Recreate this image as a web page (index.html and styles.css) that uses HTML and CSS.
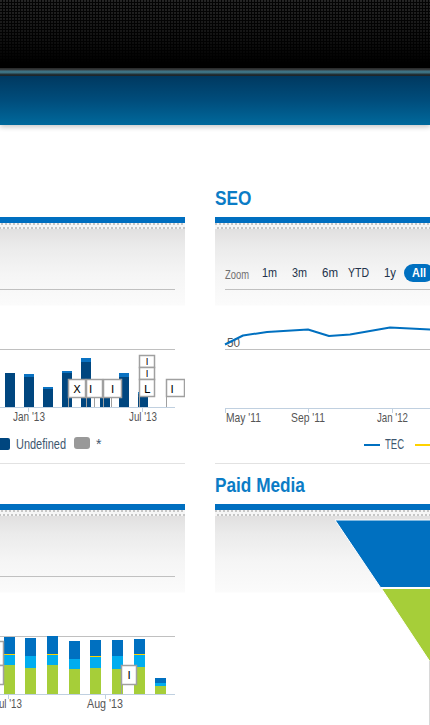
FILE: index.html
```html
<!DOCTYPE html>
<html lang="en">
<head>
<meta charset="utf-8">
<title>Dashboard</title>
<link rel="stylesheet" href="styles.css">
</head>
<body>
<header class="site-header">
  <div class="topbar"></div>
  <div class="stripe"></div>
  <div class="brandbar"></div>
</header>

<main class="dashboard">
  <section class="col">
    <article class="widget">
      <div class="widget-title" aria-hidden="true"></div>
      <div class="panel">
        <div class="panel-body body-tall">
          <svg class="chart" width="400" height="234" viewBox="-215 229 400 234">
            <g class="grid">
              <path d="M-200 289.5H175M-200 349.5H175"/>
            </g>
            <g class="bars-navy">
              <rect x="5" y="373" width="10" height="34"/>
              <rect x="24" y="374" width="10" height="33"/>
              <rect x="43" y="387" width="10" height="20"/>
              <rect x="62" y="371" width="10" height="36"/>
              <rect x="81" y="358" width="10" height="49"/>
              <rect x="100" y="382" width="10" height="25"/>
              <rect x="119" y="373" width="10" height="34"/>
              <rect x="138" y="392" width="10" height="15"/>
            </g>
            <g class="bars-cap">
              <rect x="24" y="374" width="10" height="3"/>
              <rect x="43" y="387" width="10" height="2"/>
              <rect x="62" y="371" width="10" height="2"/>
              <rect x="81" y="358" width="10" height="4"/>
              <rect x="119" y="373" width="10" height="4"/>
              <rect x="138" y="392" width="10" height="2"/>
            </g>
            <path class="axis" d="M-200 407.5H175M28.5 407V412M142.5 407V412"/>
            <g class="flags">
              <path class="stem" d="M68.5 398V407M86.5 398V407M94.5 398V407M103.5 398V407M111.5 398V407M139.5 397V407M166.5 397V407"/>
              <rect x="68.5" y="379.5" width="17" height="18"/>
              <rect x="86.5" y="379.5" width="16" height="18"/>
              <rect x="103.5" y="379.5" width="18" height="18"/>
              <rect x="139.5" y="355.5" width="15" height="12"/>
              <rect x="139.5" y="367.5" width="15" height="12"/>
              <rect x="139.5" y="379.5" width="15" height="17"/>
              <rect x="166.5" y="379.5" width="18" height="17"/>
              <text x="77" y="393">X</text>
              <text x="90.5" y="393">I</text>
              <text x="112.5" y="393">I</text>
              <text class="tiny" x="147" y="365">I</text>
              <text class="tiny" x="147" y="377">I</text>
              <text x="147" y="393">L</text>
              <text x="172" y="393">I</text>
            </g>
            <g class="xlabels">
              <text x="29" y="421" textLength="32" lengthAdjust="spacingAndGlyphs">Jan '13</text>
              <text x="143" y="421" textLength="28" lengthAdjust="spacingAndGlyphs">Jul '13</text>
            </g>
            <g class="legend">
              <rect x="-3" y="438" width="13" height="12" rx="2" fill="#00467f"/>
              <text x="16" y="449" textLength="50" lengthAdjust="spacingAndGlyphs">Undefined</text>
              <rect x="74" y="437" width="16" height="12" rx="3" fill="#999"/>
              <text x="96" y="449">*</text>
            </g>
          </svg>
        </div>
      </div>
    </article>

    <article class="widget">
      <div class="widget-title" aria-hidden="true"></div>
      <div class="panel">
        <div class="panel-body body-open">
          <svg class="chart" width="400" height="240" viewBox="-215 516 400 240">
            <g class="grid">
              <path d="M-200 576.5H175M-200 636.5H175"/>
            </g>
            <g class="stack-dark">
              <rect x="4" y="637" width="11" height="17"/>
              <rect x="25" y="638" width="11" height="18"/>
              <rect x="47" y="636" width="11" height="18"/>
              <rect x="69" y="641" width="11" height="18"/>
              <rect x="90" y="640" width="11" height="16"/>
              <rect x="112" y="640" width="11" height="16"/>
              <rect x="134" y="639" width="11" height="15"/>
              <rect x="155" y="678" width="11" height="5"/>
            </g>
            <g class="stack-yellow">
              <rect x="4" y="654" width="11" height="1"/>
              <rect x="47" y="654" width="11" height="1"/>
              <rect x="90" y="656" width="11" height="1"/>
              <rect x="134" y="654" width="11" height="1"/>
            </g>
            <g class="stack-cyan">
              <rect x="4" y="655" width="11" height="10"/>
              <rect x="25" y="656" width="11" height="12"/>
              <rect x="47" y="655" width="11" height="10"/>
              <rect x="69" y="659" width="11" height="10"/>
              <rect x="90" y="657" width="11" height="11"/>
              <rect x="112" y="656" width="11" height="13"/>
              <rect x="134" y="655" width="11" height="12"/>
              <rect x="155" y="683" width="11" height="3"/>
            </g>
            <g class="stack-green">
              <rect x="4" y="665" width="11" height="29"/>
              <rect x="25" y="668" width="11" height="26"/>
              <rect x="47" y="665" width="11" height="29"/>
              <rect x="69" y="669" width="11" height="25"/>
              <rect x="90" y="668" width="11" height="26"/>
              <rect x="112" y="669" width="11" height="25"/>
              <rect x="134" y="667" width="11" height="27"/>
              <rect x="155" y="686" width="11" height="8"/>
            </g>
            <path class="axis" d="M-200 694.5H175M8.5 694V699M105.5 694V699"/>
            <g class="flags">
              <path class="stem" d="M121.5 685V694"/>
              <rect x="-14.5" y="641.5" width="18" height="24"/>
              <rect x="-14.5" y="665.5" width="18" height="19"/>
              <rect x="121.5" y="665.5" width="15" height="19"/>
              <text x="129" y="679">I</text>
            </g>
            <g class="xlabels">
              <text x="8" y="708" textLength="28" lengthAdjust="spacingAndGlyphs">Jul '13</text>
              <text x="105" y="708" textLength="36" lengthAdjust="spacingAndGlyphs">Aug '13</text>
            </g>
          </svg>
        </div>
      </div>
    </article>
  </section>

  <section class="col">
    <article class="widget">
      <h2 class="widget-title">SEO</h2>
      <div class="panel">
        <div class="panel-body body-tall">
          <svg class="chart" width="400" height="234" viewBox="215 229 400 234">
            <g class="range">
              <text class="range-label" x="225" y="279" textLength="24" lengthAdjust="spacingAndGlyphs">Zoom</text>
              <text class="range-btn" x="269.5" y="277" textLength="15" lengthAdjust="spacingAndGlyphs">1m</text>
              <text class="range-btn" x="299.5" y="277" textLength="15" lengthAdjust="spacingAndGlyphs">3m</text>
              <text class="range-btn" x="330" y="277" textLength="16" lengthAdjust="spacingAndGlyphs">6m</text>
              <text class="range-btn" x="358.5" y="277" textLength="21" lengthAdjust="spacingAndGlyphs">YTD</text>
              <text class="range-btn" x="390" y="277" textLength="12" lengthAdjust="spacingAndGlyphs">1y</text>
              <rect x="404" y="264" width="30" height="18" rx="9" fill="#0070c0"/>
              <text class="range-on" x="412" y="277" textLength="14" lengthAdjust="spacingAndGlyphs">All</text>
            </g>
            <g class="grid">
              <path d="M225 289.5H615M225 349.5H615"/>
            </g>
            <text class="ylabel" x="227" y="347" textLength="13" lengthAdjust="spacingAndGlyphs">50</text>
            <polyline class="seo-line" points="225,344.5 243,335.5 267,332 308,329.5 329,336 350,334.5 390,327.5 430,329.5 470,328"/>
            <path class="axis" d="M225 408.5H615M225.5 408V413M308.5 408V413M392.5 408V413"/>
            <g class="xlabels">
              <text class="start" x="226" y="422" textLength="35" lengthAdjust="spacingAndGlyphs">May '11</text>
              <text x="308" y="422" textLength="34" lengthAdjust="spacingAndGlyphs">Sep '11</text>
              <text x="392.5" y="422" textLength="31" lengthAdjust="spacingAndGlyphs">Jan '12</text>
            </g>
            <g class="legend">
              <path d="M364 445H380" stroke="#0070c0" stroke-width="2"/>
              <text x="385" y="449" textLength="19" lengthAdjust="spacingAndGlyphs">TEC</text>
              <path d="M415 445H431" stroke="#ffd200" stroke-width="2"/>
            </g>
          </svg>
        </div>
      </div>
    </article>

    <article class="widget">
      <h2 class="widget-title">Paid Media</h2>
      <div class="panel">
        <div class="panel-body body-open">
          <svg class="chart" width="400" height="240" viewBox="215 516 400 240">
            <polygon class="funnel-a" points="335,520 700,520 700,587.5 380.5,587.5"/>
            <polygon class="funnel-b" points="381.5,588.5 700,588.5 700,760 495,760"/>
            <path d="M429.5 661V760" stroke="#d8d8d8"/>
          </svg>
        </div>
      </div>
    </article>
  </section>
</main>
</body>
</html>
```

FILE: styles.css
```css
html, body {
  margin: 0;
  padding: 0;
  overflow: hidden;
  background: #fff;
}

body {
  width: 430px;
  height: 725px;
  font-family: "Liberation Sans", Arial, sans-serif;
}

.site-header {
  position: relative;
  z-index: 1;
  box-shadow: 0 2px 5px rgba(0, 0, 0, 0.22);
}

.topbar {
  height: 68px;
  background-color: #040404;
  background-image:
    linear-gradient(to bottom, rgba(0, 0, 0, 0) 0, rgba(0, 0, 0, 0.45) 50%, rgba(0, 0, 0, 1) 92%),
    radial-gradient(circle at 1px 1px, #262626 0.7px, transparent 1.1px);
  background-size: 100% 100%, 3px 3px;
}

.stripe {
  height: 8px;
  background: linear-gradient(to bottom, #262626 0, #3a3f42 2px, #3f7486 3px, #3a6f80 5px, #24343a 6px, #1b2226 8px);
}

.brandbar {
  height: 49px;
  background: linear-gradient(to bottom, #003960 0, #004d7c 50%, #00699c 100%);
}

.dashboard {
  display: grid;
  grid-template-columns: 400px 400px;
  column-gap: 30px;
  margin-left: -215px;
  padding-top: 60px;
}

.widget {
  margin-bottom: 8px;
}

.widget-title {
  margin: 0 0 6px;
  height: 26px;
  font-size: 21px;
  line-height: 26px;
  font-weight: bold;
  color: #0b7cc6;
  white-space: nowrap;
  transform: scaleX(0.82);
  transform-origin: 0 50%;
}

.panel {
  border-top: 6px solid #006fc0;
  border-bottom: 1px solid #e2e2e2;
}

.panel::before {
  content: "";
  display: block;
  height: 6px;
  background-color: #f6f6f6;
  background-image:
    radial-gradient(circle at 1px 1px, #c6c6c6 0.75px, transparent 1.2px),
    radial-gradient(circle at 1px 1px, #c6c6c6 0.75px, transparent 1.2px);
  background-size: 4px 8px, 4px 8px;
  background-position: 0 0, 2px 4px;
}

.panel-body {
  background: linear-gradient(to bottom, #e1e0e0 0, #ebebeb 18px, #f5f5f5 45px, #fbfbfb 76px, #fff 77px);
}

.body-tall {
  height: 234px;
}

.body-open {
  height: 240px;
}

.chart {
  display: block;
  overflow: hidden;
  font-family: "Liberation Sans", Arial, sans-serif;
}

.grid path {
  fill: none;
  stroke: #c0c0c0;
  stroke-width: 1;
}

.axis {
  fill: none;
  stroke: #c0d0e0;
  stroke-width: 1;
}

.bars-navy rect { fill: #00467f; }
.bars-cap rect { fill: #0a72c2; }

.stack-dark rect { fill: #0070c0; }
.stack-yellow rect { fill: #ffd200; }
.stack-cyan rect { fill: #00adef; }
.stack-green rect { fill: #a6ce39; }

.flags rect {
  fill: #fff;
  stroke: #a0a0a0;
  stroke-width: 1.5;
}

.flags .stem {
  fill: none;
  stroke: #a0a0a0;
  stroke-width: 1;
}

.flags text {
  font-family: "DejaVu Sans", Verdana, sans-serif;
  font-size: 11px;
  fill: #000;
  text-anchor: middle;
}

.flags text.tiny {
  font-size: 9px;
}

.xlabels text {
  font-size: 13px;
  fill: #555;
  text-anchor: middle;
}

.xlabels text.start {
  text-anchor: start;
}

.ylabel {
  font-size: 13px;
  fill: #555;
}

.legend text {
  font-size: 14px;
  fill: #3e576f;
}

.range-label {
  font-size: 13px;
  fill: #707070;
}

.range-btn {
  font-size: 13px;
  fill: #22324a;
  text-anchor: middle;
}

.range-on {
  font-size: 13px;
  font-weight: bold;
  fill: #fff;
}

.seo-line {
  fill: none;
  stroke: #0070c0;
  stroke-width: 2;
  stroke-linejoin: round;
}

.funnel-a {
  fill: #0070c0;
  stroke: #fff;
  stroke-width: 1;
}

.funnel-b {
  fill: #a6ce39;
  stroke: #fff;
  stroke-width: 1;
}
```
